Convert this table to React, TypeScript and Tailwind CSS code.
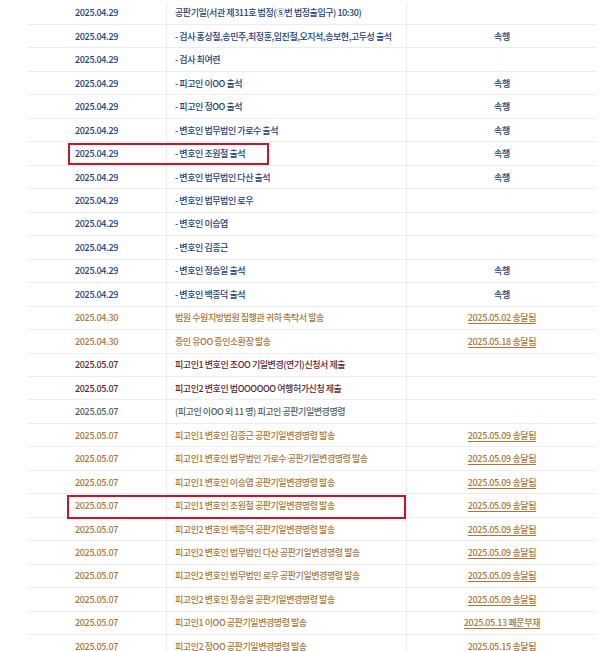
import React from "react";

type Row = { d: string; t: string; r?: string; c: "navy" | "gold" | "maroon" | "grey"; link?: boolean };

const rows: Row[] = [
  { d: "2025.04.29", t: "공판기일(서관 제311호 법정(⑤번 법정출입구) 10:30)", c: "navy" },
  { d: "2025.04.29", t: "- 검사 홍상철,송민주,최정훈,임진철,오지석,송보현,고두성 출석", r: "속행", c: "navy" },
  { d: "2025.04.29", t: "- 검사 최여련", c: "navy" },
  { d: "2025.04.29", t: "- 피고인 이OO 출석", r: "속행", c: "navy" },
  { d: "2025.04.29", t: "- 피고인 정OO 출석", r: "속행", c: "navy" },
  { d: "2025.04.29", t: "- 변호인 법무법인 가로수 출석", r: "속행", c: "navy" },
  { d: "2025.04.29", t: "- 변호인 조원철 출석", r: "속행", c: "navy" },
  { d: "2025.04.29", t: "- 변호인 법무법인 다산 출석", r: "속행", c: "navy" },
  { d: "2025.04.29", t: "- 변호인 법무법인 로우", c: "navy" },
  { d: "2025.04.29", t: "- 변호인 이승엽", c: "navy" },
  { d: "2025.04.29", t: "- 변호인 김종근", c: "navy" },
  { d: "2025.04.29", t: "- 변호인 정승일 출석", r: "속행", c: "navy" },
  { d: "2025.04.29", t: "- 변호인 백종덕 출석", r: "속행", c: "navy" },
  { d: "2025.04.30", t: "법원 수원지방법원 집행관 귀하 촉탁서 발송", r: "2025.05.02 송달됨", c: "gold", link: true },
  { d: "2025.04.30", t: "증인 유OO 증인소환장 발송", r: "2025.05.18 송달됨", c: "gold", link: true },
  { d: "2025.05.07", t: "피고인1 변호인 조OO 기일변경(연기)신청서 제출", c: "maroon" },
  { d: "2025.05.07", t: "피고인2 변호인 법OOOOOO 여행허가신청 제출", c: "maroon" },
  { d: "2025.05.07", t: "(피고인 이OO 외 11 명) 피고인 공판기일변경명령", c: "grey" },
  { d: "2025.05.07", t: "피고인1 변호인 김종근 공판기일변경명령 발송", r: "2025.05.09 송달됨", c: "gold", link: true },
  { d: "2025.05.07", t: "피고인1 변호인 법무법인 가로수 공판기일변경명령 발송", r: "2025.05.09 송달됨", c: "gold", link: true },
  { d: "2025.05.07", t: "피고인1 변호인 이승엽 공판기일변경명령 발송", r: "2025.05.09 송달됨", c: "gold", link: true },
  { d: "2025.05.07", t: "피고인1 변호인 조원철 공판기일변경명령 발송", r: "2025.05.09 송달됨", c: "gold", link: true },
  { d: "2025.05.07", t: "피고인2 변호인 백종덕 공판기일변경명령 발송", r: "2025.05.09 송달됨", c: "gold", link: true },
  { d: "2025.05.07", t: "피고인2 변호인 법무법인 다산 공판기일변경명령 발송", r: "2025.05.09 송달됨", c: "gold", link: true },
  { d: "2025.05.07", t: "피고인2 변호인 법무법인 로우 공판기일변경명령 발송", r: "2025.05.09 송달됨", c: "gold", link: true },
  { d: "2025.05.07", t: "피고인2 변호인 정승일 공판기일변경명령 발송", r: "2025.05.09 송달됨", c: "gold", link: true },
  { d: "2025.05.07", t: "피고인1 이OO 공판기일변경명령 발송", r: "2025.05.13 폐문부재", c: "gold", link: true },
  { d: "2025.05.07", t: "피고인2 정OO 공판기일변경명령 발송", r: "2025.05.15 송달됨", c: "gold", link: true },
];

const colorClass: Record<Row["c"], string> = {
  navy: "text-[#22407a]",
  gold: "text-[#a8773a]",
  maroon: "text-[#5e1f33]",
  grey: "text-[#50625c]",
};

export default function App() {
  return (
    <div
      className="w-[600px] h-[651px] overflow-hidden bg-white pt-[1.5px]"
      style={{ fontFamily: '"Noto Sans CJK KR", "Noto Sans", sans-serif' }}
    >
      <div className="relative ml-[27px] w-[570px]">
        {rows.map((row, i) => (
          <div
            key={i}
            className={`flex h-[23.47px] border-b border-[#ededed] text-[9px] font-medium leading-none ${colorClass[row.c]}`}
          >
            <div className="flex w-[139px] items-center justify-center tracking-[-0.35px]">{row.d}</div>
            <div className="flex w-[240px] items-center border-l border-[#ececec] pl-[8px] tracking-[-0.45px] whitespace-nowrap">
              {row.t}
            </div>
            <div className="flex flex-1 items-center justify-center border-l border-[#ececec] tracking-[-0.35px]">
              {row.r ? (
                row.link ? (
                  <span className="underline underline-offset-[2px] decoration-[0.8px]">{row.r}</span>
                ) : (
                  <span>{row.r}</span>
                )
              ) : null}
            </div>
          </div>
        ))}
        <div className="absolute left-[41px] top-[141.5px] h-[22px] w-[201px] border-2 border-[#c8152d]" />
        <div className="absolute left-[40px] top-[493.5px] h-[24px] w-[339px] border-2 border-[#c8152d]" />
      </div>
    </div>
  );
}
